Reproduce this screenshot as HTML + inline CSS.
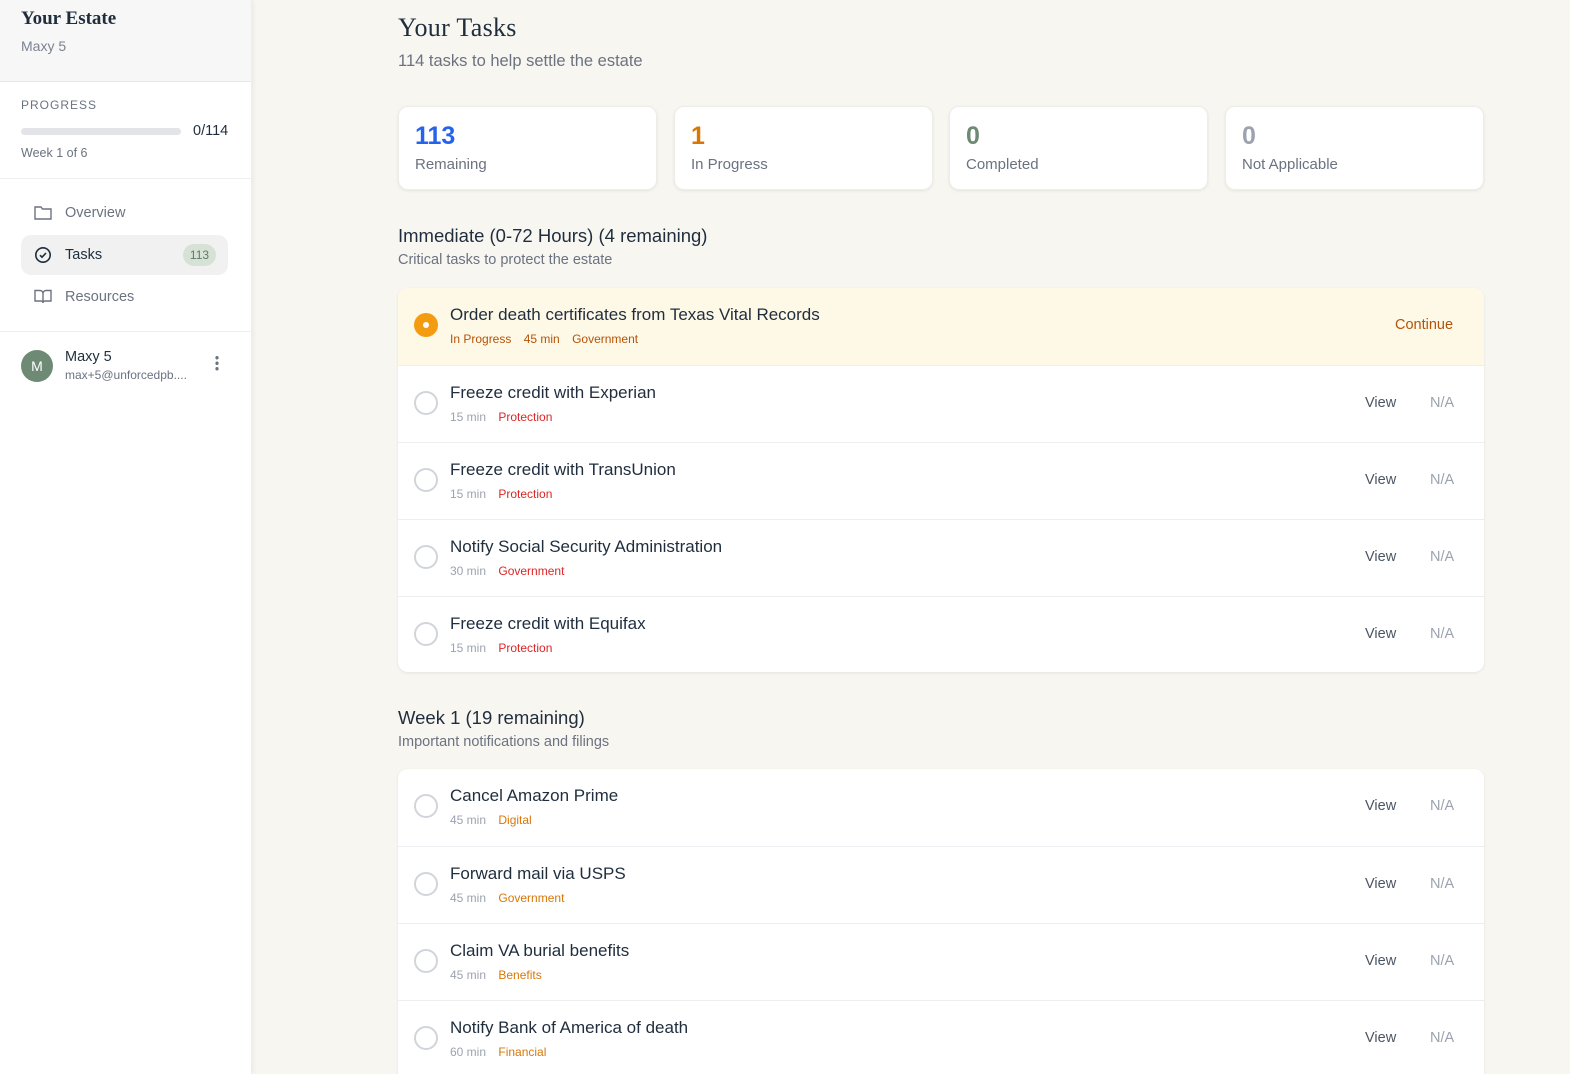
<!DOCTYPE html>
<html style="width:1570px;height:1074px;overflow:hidden"><head><meta charset="utf-8"><style>
*{box-sizing:border-box;margin:0;padding:0}
body{width:1570px;height:1074px;overflow:hidden;background:#f8f6f1;font-family:"Liberation Sans",sans-serif;position:relative;color:#1f2d3d}
.sb{position:absolute;left:0;top:0;width:252px;height:1074px;background:#fff;box-shadow:1px 0 4px rgba(0,0,0,.06);border-right:1px solid #eeeeec}
.abs{position:absolute}
.serif{font-family:"Liberation Serif",serif;font-weight:bold}
.card{position:absolute;background:#fff;border-radius:10px;box-shadow:0 1px 3px rgba(0,0,0,.08);border:1px solid #efede8}
.num{position:absolute;left:16px;top:15px;font-size:25px;font-weight:bold}
.lbl{position:absolute;left:16px;top:49px;font-size:15px;color:#6b7280}
.list{position:absolute;left:398px;width:1086px;background:#fff;border-radius:10px;box-shadow:0 1px 3px rgba(0,0,0,.08);overflow:hidden}
.row{position:absolute;left:0;width:1086px;height:77px;border-top:1px solid #eceef1}
.row .c{position:absolute;left:16px;top:25px;width:24px;height:24px;border-radius:50%;border:2px solid #d1d5db}
.row .t{position:absolute;left:52px;top:17px;font-size:17px;color:#1f2d3d}
.row .m{position:absolute;left:52px;top:44px;font-size:12px;color:#9ca3af}
.row .m span{margin-right:9px}
.row .v{position:absolute;left:967px;top:29px;font-size:14.5px;color:#4b5563}
.row .n{position:absolute;left:1032px;top:29px;font-size:14.5px;color:#9ca3af}
.red{color:#dc2626}.org{color:#d97706}
</style></head><body>
<div class="sb">
 <div class="abs" style="left:0;top:0;width:251px;height:82px;background:#f7f7f7;border-bottom:1px solid #e8e8e8"></div>
 <div class="abs serif" style="left:21px;top:8px;font-size:19px;color:#1f2d3d">Your Estate</div>
 <div class="abs" style="left:21px;top:38px;font-size:14px;color:#7b8290">Maxy 5</div>
 <div class="abs" style="left:21px;top:98px;font-size:12px;letter-spacing:1px;color:#6b7280">PROGRESS</div>
 <div class="abs" style="left:21px;top:128px;width:160px;height:7px;border-radius:4px;background:#e3e4e8"></div>
 <div class="abs" style="left:193px;top:123px;font-size:14.5px;color:#1f2d3d">0/114</div>
 <div class="abs" style="left:21px;top:146px;font-size:12.5px;color:#6b7280">Week 1 of 6</div>
 <div class="abs" style="left:0;top:178px;width:251px;border-top:1px solid #eceef1"></div>
 <svg class="abs" style="left:34px;top:205px" width="18" height="15" viewBox="0 0 18 15" fill="none" stroke="#6b7280" stroke-width="1.4"><path d="M1 2h6l1.5 2H17v10H1z"/></svg>
 <div class="abs" style="left:65px;top:205px;font-size:14.5px;color:#6b7280">Overview</div>
 <div class="abs" style="left:21px;top:235px;width:207px;height:40px;border-radius:10px;background:#f0f1f0"></div>
 <svg class="abs" style="left:34px;top:246px" width="18" height="18" viewBox="0 0 18 18" fill="none" stroke="#1f2d3d" stroke-width="1.6"><circle cx="9" cy="9" r="7.2"/><path d="M6 9.2l2 2 4-4.2"/></svg>
 <div class="abs" style="left:65px;top:247px;font-size:14.5px;color:#1f2d3d">Tasks</div>
 <div class="abs" style="left:183px;top:244px;width:33px;height:22px;border-radius:11px;background:#d7e2d7;color:#5f7a64;font-size:12px;text-align:center;line-height:22px">113</div>
 <svg class="abs" style="left:34px;top:289px" width="18" height="15" viewBox="0 0 18 15" fill="none" stroke="#6b7280" stroke-width="1.4"><path d="M1 1.5h5a3 3 0 0 1 3 3V14a2 2 0 0 0-2-2H1zM17 1.5h-5a3 3 0 0 0-3 3V14a2 2 0 0 1 2-2h6z"/></svg>
 <div class="abs" style="left:65px;top:289px;font-size:14.5px;color:#6b7280">Resources</div>
 <div class="abs" style="left:0;top:331px;width:251px;border-top:1px solid #eceef1"></div>
 <div class="abs" style="left:21px;top:350px;width:32px;height:32px;border-radius:50%;background:#6e8a74;color:#fff;font-size:14px;text-align:center;line-height:32px">M</div>
 <div class="abs" style="left:65px;top:349px;font-size:14.5px;color:#1f2d3d">Maxy 5</div>
 <div class="abs" style="left:65px;top:368px;font-size:12px;color:#6b7280">max+5@unforcedpb....</div>
 <div class="abs" style="left:215px;top:355px;width:4px;height:16px;background:radial-gradient(circle,#6b7280 1.6px,transparent 1.8px) 0 0/4px 5.5px"></div>
</div>

<div class="abs serif" style="left:398px;top:13px;font-size:26px;font-weight:normal;color:#1f2d3d;letter-spacing:0.3px">Your Tasks</div>
<div class="abs" style="left:398px;top:52px;font-size:16.5px;color:#6b7280">114 tasks to help settle the estate</div>

<div class="card" style="left:398px;top:106px;width:259px;height:84px"><div class="num" style="color:#2563eb">113</div><div class="lbl">Remaining</div></div>
<div class="card" style="left:674px;top:106px;width:259px;height:84px"><div class="num" style="color:#d97706">1</div><div class="lbl">In Progress</div></div>
<div class="card" style="left:949px;top:106px;width:259px;height:84px"><div class="num" style="color:#6e8a74">0</div><div class="lbl">Completed</div></div>
<div class="card" style="left:1225px;top:106px;width:259px;height:84px"><div class="num" style="color:#9ca3af">0</div><div class="lbl">Not Applicable</div></div>

<div class="abs" style="left:398px;top:225px;font-size:18.5px;color:#1f2d3d">Immediate (0-72 Hours) (4 remaining)</div>
<div class="abs" style="left:398px;top:252px;font-size:14.5px;color:#6b7280">Critical tasks to protect the estate</div>

<div class="list" style="top:288px;height:384px">
 <div class="row" style="top:0;border-top:0;background:#fef8e6">
  <div class="c" style="border:0;background:#f39c12"><div style="position:absolute;left:9px;top:9px;width:6px;height:6px;border-radius:50%;background:#fff"></div></div>
  <div class="t">Order death certificates from Texas Vital Records</div>
  <div class="m" style="color:#b45309"><span>In Progress</span> <span>45 min</span> <span>Government</span></div>
  <div class="v" style="left:997px;color:#b45309">Continue</div>
 </div>
 <div class="row" style="top:77px"><div class="c"></div><div class="t">Freeze credit with Experian</div><div class="m"><span>15 min</span> <span class="red">Protection</span></div><div class="v">View</div><div class="n">N/A</div></div>
 <div class="row" style="top:154px"><div class="c"></div><div class="t">Freeze credit with TransUnion</div><div class="m"><span>15 min</span> <span class="red">Protection</span></div><div class="v">View</div><div class="n">N/A</div></div>
 <div class="row" style="top:231px"><div class="c"></div><div class="t">Notify Social Security Administration</div><div class="m"><span>30 min</span> <span class="red">Government</span></div><div class="v">View</div><div class="n">N/A</div></div>
 <div class="row" style="top:308px"><div class="c"></div><div class="t">Freeze credit with Equifax</div><div class="m"><span>15 min</span> <span class="red">Protection</span></div><div class="v">View</div><div class="n">N/A</div></div>
</div>

<div class="abs" style="left:398px;top:707px;font-size:18.5px;color:#1f2d3d">Week 1 (19 remaining)</div>
<div class="abs" style="left:398px;top:734px;font-size:14.5px;color:#6b7280">Important notifications and filings</div>

<div class="list" style="top:769px;height:305px;border-radius:10px 10px 0 0">
 <div class="row" style="top:0;border-top:0"><div class="c"></div><div class="t">Cancel Amazon Prime</div><div class="m"><span>45 min</span> <span class="org">Digital</span></div><div class="v">View</div><div class="n">N/A</div></div>
 <div class="row" style="top:77px"><div class="c"></div><div class="t">Forward mail via USPS</div><div class="m"><span>45 min</span> <span class="org">Government</span></div><div class="v">View</div><div class="n">N/A</div></div>
 <div class="row" style="top:154px"><div class="c"></div><div class="t">Claim VA burial benefits</div><div class="m"><span>45 min</span> <span class="org">Benefits</span></div><div class="v">View</div><div class="n">N/A</div></div>
 <div class="row" style="top:231px"><div class="c"></div><div class="t">Notify Bank of America of death</div><div class="m"><span>60 min</span> <span class="org">Financial</span></div><div class="v">View</div><div class="n">N/A</div></div>
</div>
</body></html>
